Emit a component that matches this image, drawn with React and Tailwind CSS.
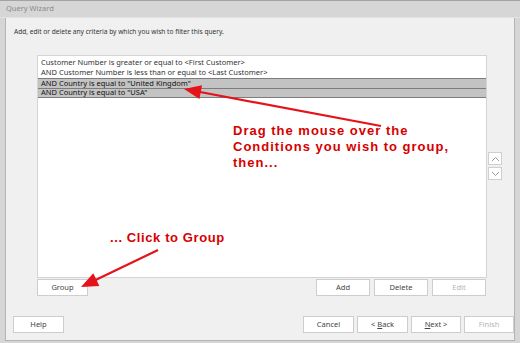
import React from 'react'

const rows = [
  { text: 'Customer Number is greater or equal to <First Customer>', sel: false },
  { text: 'AND Customer Number is less than or equal to <Last Customer>', sel: false },
  { text: 'AND Country is equal to "United Kingdom"', sel: true },
  { text: 'AND Country is equal to "USA"', sel: true },
]

function Btn({ children, w = 'w-[54px]', disabled }) {
  return (
    <div
      className={`${w} h-[17px] flex items-center justify-center bg-white border border-[#cdcdcd] text-[7.5px] ${disabled ? 'text-[#b4b4b4]' : 'text-[#444]'}`}
    >
      {children}
    </div>
  )
}

function Arrow({ x1, y1, x2, y2 }) {
  const dx = x2 - x1
  const dy = y2 - y1
  const len = Math.hypot(dx, dy)
  const ux = dx / len
  const uy = dy / len
  const hl = 17
  const hw = 7
  const bx = x2 - ux * hl
  const by = y2 - uy * hl
  const px = -uy * hw
  const py = ux * hw
  return (
    <g>
      <line x1={x1} y1={y1} x2={bx + ux * 2} y2={by + uy * 2} stroke="#e5121a" strokeWidth="2.2" />
      <polygon points={`${x2},${y2} ${bx + px},${by + py} ${bx - px},${by - py}`} fill="#e5121a" />
    </g>
  )
}

export default function App() {
  return (
    <div
      className="relative w-[520px] h-[343px] bg-[#d6d6d6] border-t border-[#a3a3a3] flex flex-col overflow-hidden"
      style={{ fontFamily: '"Noto Sans", "Open Sans", sans-serif' }}
    >
      <div className="h-[17px] px-[6px] flex items-center text-[7.5px] text-[#8a8a8a] border-b border-[#e2e2e2]">
        Query Wizard
      </div>

      <div className="flex-1 ml-[5px] mr-[5px] mb-[2px] bg-[#f0f0f0] border-l border-r border-b border-[#b4b4b4] flex flex-col">
        <div className="pl-[8px] pt-[9px] h-[37px] text-[6.6px] text-[#333]">
          Add, edit or delete any criteria by which you wish to filter this query.
        </div>

        <div className="flex pl-[31px]">
          <div className="w-[450px] h-[223px] bg-white border border-[#d4d4d4] pt-[2px]">
            {rows.map((r, i) => (
              <div
                key={i}
                className={`h-[10px] pl-[3px] flex items-center text-[7.5px] leading-none whitespace-nowrap ${r.sel ? 'bg-[#c3c3c3] text-[#111] border-t border-[#7c7c7c]' : 'text-[#333]'} ${i === 3 ? 'border-b' : ''}`}
              >
                {r.text}
              </div>
            ))}
          </div>
          <div className="flex flex-col gap-[2px] pt-[97px] pl-[1px]">
            <div className="w-[14px] h-[13px] bg-white border border-[#cfcfcf] flex items-center justify-center">
              <svg width="9" height="6" viewBox="0 0 9 6">
                <path d="M1 5 L4.5 1.5 L8 5" fill="none" stroke="#9a9a9a" strokeWidth="1" />
              </svg>
            </div>
            <div className="w-[14px] h-[13px] bg-white border border-[#cfcfcf] flex items-center justify-center">
              <svg width="9" height="6" viewBox="0 0 9 6">
                <path d="M1 1 L4.5 4.5 L8 1" fill="none" stroke="#9a9a9a" strokeWidth="1" />
              </svg>
            </div>
          </div>
        </div>

        <div className="flex pl-[31px] pt-[1px] w-[480px]">
          <Btn w="w-[51px]">Group</Btn>
          <div className="flex-1" />
          <div className="flex gap-[4px]">
            <Btn>Add</Btn>
            <Btn>Delete</Btn>
            <Btn disabled>Edit</Btn>
          </div>
        </div>

        <div className="flex-1" />

        <div className="flex items-center pl-[7px] pr-0 pb-[7px]">
          <Btn w="w-[51px]">Help</Btn>
          <div className="flex-1" />
          <div className="flex gap-[3px]">
            <Btn w="w-[51px]">Cancel</Btn>
            <Btn w="w-[51px]">
              &lt; <span className="underline ml-[2px]">B</span>ack
            </Btn>
            <Btn w="w-[50px]">
              <span className="underline">N</span>ext &gt;
            </Btn>
            <Btn w="w-[50px]" disabled>Finish</Btn>
          </div>
        </div>
      </div>

      <div
        className="absolute left-[233px] top-[122px] text-[13px] font-bold leading-[16px] tracking-[1px] text-[#d60000]"
        style={{ fontFamily: '"Liberation Sans", Arial, sans-serif' }}
      >
        <div>Drag the mouse over the</div>
        <div>Conditions you wish to group,</div>
        <div>then...</div>
      </div>
      <div
        className="absolute left-[110px] top-[229px] text-[13px] font-bold leading-[16px] tracking-[0.6px] text-[#d60000]"
        style={{ fontFamily: '"Liberation Sans", Arial, sans-serif' }}
      >
        ... Click to Group
      </div>

      <svg className="absolute inset-0 pointer-events-none" width="520" height="343">
        <Arrow x1={381} y1={125} x2={184} y2={88} />
        <Arrow x1={158} y1={249} x2={81} y2={286} />
      </svg>
    </div>
  )
}
